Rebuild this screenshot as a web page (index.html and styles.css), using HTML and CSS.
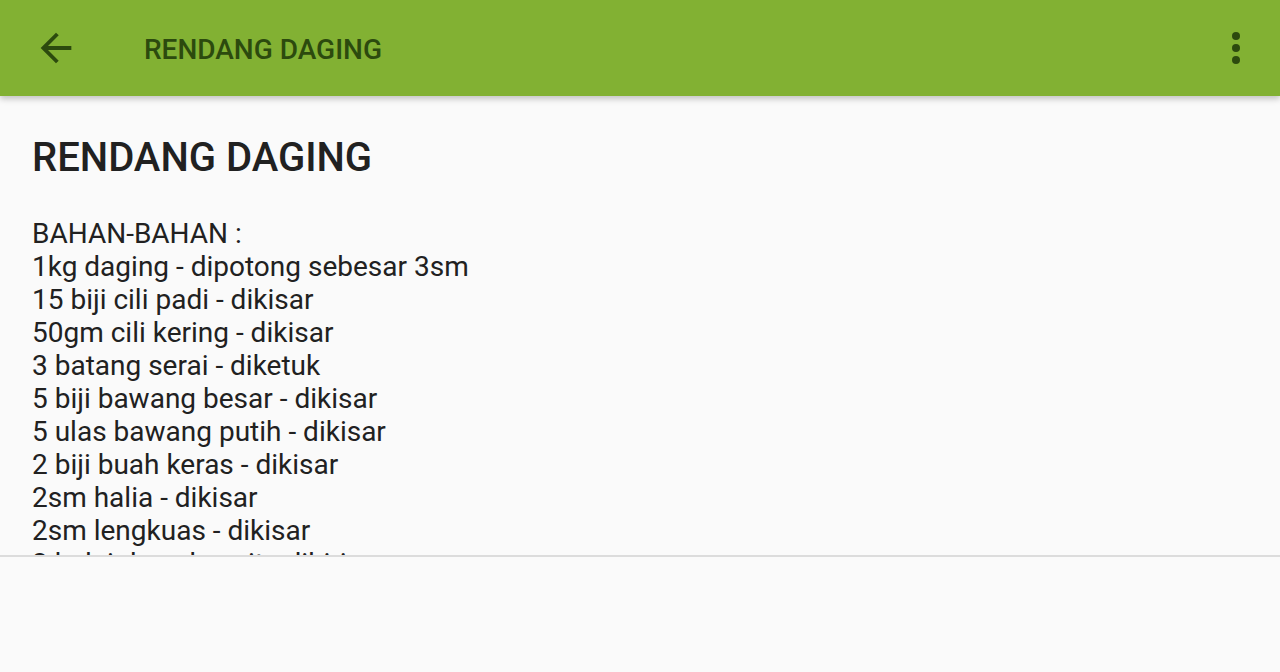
FILE: index.html
```html
<!DOCTYPE html>
<html lang="ms">
<head>
    <meta charset="UTF-8">
    <meta name="viewport" content="width=device-width, initial-scale=1.0">
    <title>Rendang Daging</title>
    <link rel="stylesheet" href="styles.css">
</head>
<body>
    <header class="toolbar">
        <button class="icon-btn back-btn" aria-label="Kembali">
            <svg viewBox="0 0 24 24" width="46" height="46">
                <path d="M20 11H7.83l5.59-5.59L12 4l-8 8 8 8 1.41-1.41L7.83 13H20v-2z"/>
            </svg>
        </button>
        <h1 class="toolbar-title">RENDANG DAGING</h1>
        <button class="icon-btn menu-btn" aria-label="Menu">
            <svg viewBox="0 0 24 24" width="48" height="48">
                <circle cx="12" cy="6" r="2"/>
                <circle cx="12" cy="12" r="2"/>
                <circle cx="12" cy="18" r="2"/>
            </svg>
        </button>
    </header>

    <main class="recipe">
        <h2 class="recipe-title">RENDANG DAGING</h2>
        <div class="recipe-body">
            <p>BAHAN-BAHAN :</p>
            <p>1kg daging - dipotong sebesar 3sm</p>
            <p>15 biji cili padi - dikisar</p>
            <p>50gm cili kering - dikisar</p>
            <p>3 batang serai - diketuk</p>
            <p>5 biji bawang besar - dikisar</p>
            <p>5 ulas bawang putih - dikisar</p>
            <p>2 biji buah keras - dikisar</p>
            <p>2sm halia - dikisar</p>
            <p>2sm lengkuas - dikisar</p>
            <p>2 helai daun kunyit - dihiris</p>
        </div>
    </main>

    <footer class="bottom-area"></footer>
</body>
</html>
```

FILE: styles.css
```css
* {
    margin: 0;
    padding: 0;
    box-sizing: border-box;
}

body {
    font-family: Roboto, 'Noto Sans', sans-serif;
    background: #fafafa;
    width: 1280px;
    height: 672px;
    overflow: hidden;
    display: flex;
    flex-direction: column;
}

.toolbar {
    height: 96px;
    flex-shrink: 0;
    background: #82b133;
    display: flex;
    align-items: center;
    padding: 0 20px 0 33px;
    box-shadow: 0 3px 6px rgba(0,0,0,0.22);
    position: relative;
    z-index: 1;
}

.icon-btn {
    background: none;
    border: none;
    display: flex;
    fill: #2c4a0e;
}

.toolbar-title {
    flex: 1;
    margin-left: 65px;
    margin-top: 2px;
    color: #2c4a0e;
    font-size: 28px;
    font-weight: 500;
}

.recipe {
    height: 461px;
    flex-shrink: 0;
    overflow: hidden;
    padding: 38px 32px 0;
    color: #212121;
    border-bottom: 2px solid #dcdcdc;
}

.recipe-title {
    font-size: 40px;
    font-weight: 500;
    line-height: 48px;
    margin-bottom: 35px;
}

.recipe-body p {
    font-size: 28px;
    line-height: 33px;
}

.bottom-area {
    flex: 1;
}
```
